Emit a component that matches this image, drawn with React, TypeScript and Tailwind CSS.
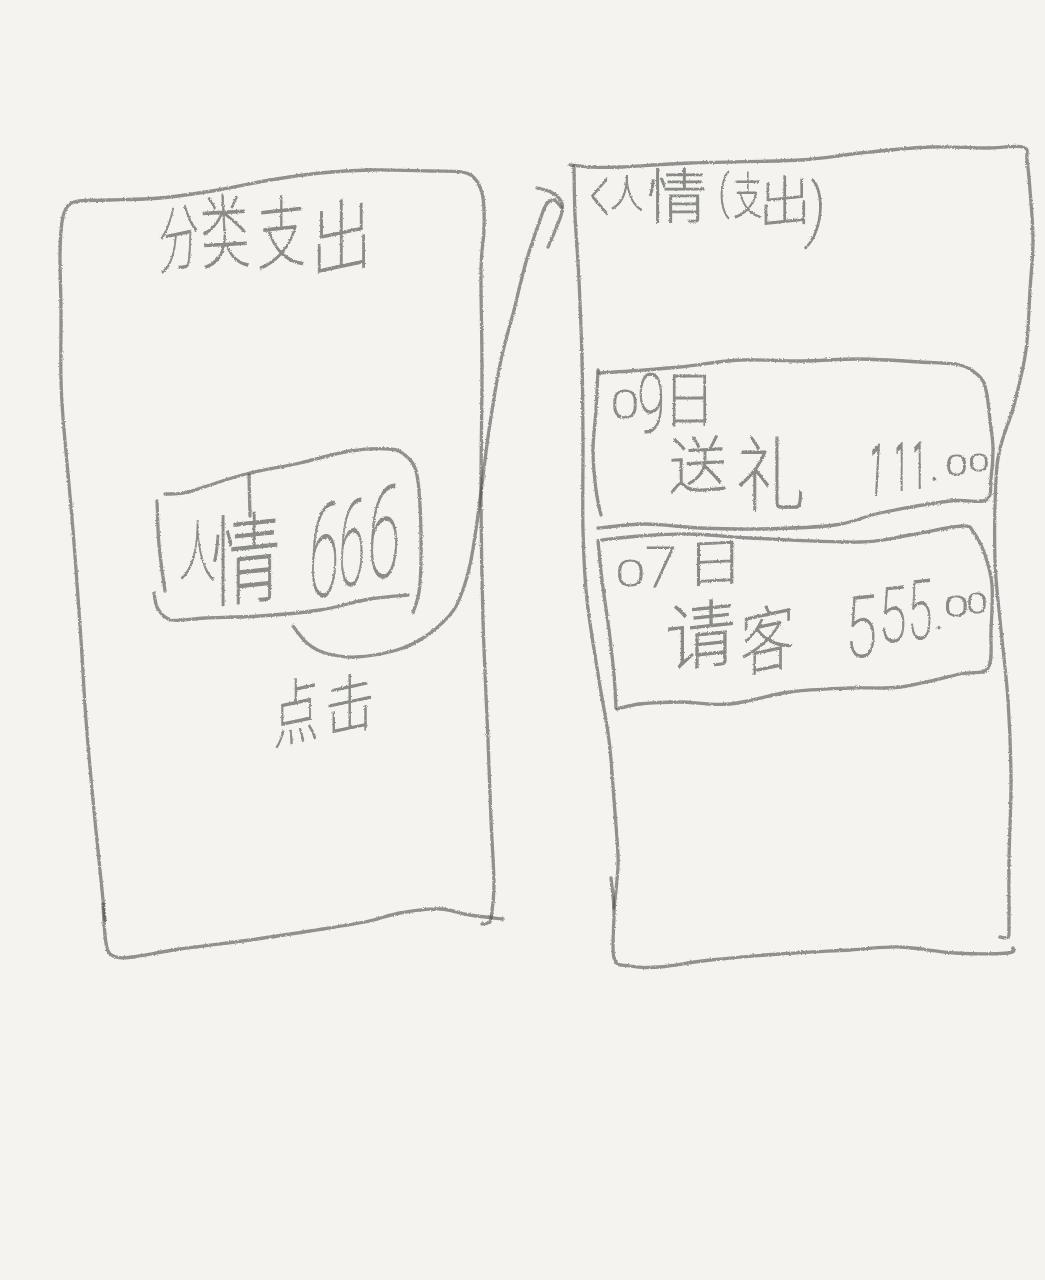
import React from 'react';

type Point = [number, number];

/* Smooth pen stroke through a list of points. */
function stroke(points: Point[]): string {
  let d = `M${points[0][0]} ${points[0][1]}`;
  for (let i = 0; i < points.length - 1; i++) {
    const a = points[Math.max(0, i - 1)];
    const b = points[i];
    const c = points[i + 1];
    const e = points[Math.min(points.length - 1, i + 2)];
    d += `C${b[0] + (c[0] - a[0]) / 6} ${b[1] + (c[1] - a[1]) / 6} ${c[0] - (e[0] - b[0]) / 6} ${c[1] - (e[1] - b[1]) / 6} ${c[0]} ${c[1]}`;
  }
  return d;
}

function Pencil({ box, lines, className }: { box: string; lines: Point[][]; className: string }) {
  return (
    <svg viewBox={box} className={`pointer-events-none absolute overflow-visible ${className}`} aria-hidden="true">
      <g filter="url(#pencil)" fill="none" stroke="#444442" strokeOpacity="0.56" strokeWidth="3.3" strokeLinecap="round" strokeLinejoin="round">
        {lines.map((line, i) => (
          <path key={i} d={stroke(line)} />
        ))}
      </g>
    </svg>
  );
}

const FAMILY = 'Roboto, "Noto Sans CJK SC", sans-serif';
const pen = document.createElement('canvas').getContext('2d')!;

/* One handwritten character, stretched to fill a w × h box. */
function Ink({ ch, w, h, x = 0, y = 0, tilt = '' }: { ch: string; w: number; h: number; x?: number; y?: number; tilt?: string }) {
  pen.font = `100 100px ${FAMILY}`;
  const m = pen.measureText(ch);
  const inkW = m.actualBoundingBoxLeft + m.actualBoundingBoxRight;
  const inkH = m.actualBoundingBoxAscent + m.actualBoundingBoxDescent;
  const size = (h / inkH) * 100;
  const k = size / 100;
  const baseline = size / 2 + ((m.fontBoundingBoxAscent - m.fontBoundingBoxDescent) / 2) * k;
  const sx = w / (inkW * k);
  return (
    <span className={`block flex-none ${tilt}`} style={{ width: w, height: h, marginLeft: x, marginTop: y }}>
      <span
        className="block w-max origin-top-left whitespace-pre font-thin leading-none"
        style={{
          fontSize: size,
          transform: `scaleX(${sx}) translate(${m.actualBoundingBoxLeft * k}px, ${m.actualBoundingBoxAscent * k - baseline}px)`,
        }}
      >
        {ch}
      </span>
    </span>
  );
}

function Line({ className, children }: { className: string; children: React.ReactNode }) {
  return <div className={`flex items-start [filter:url(#pencil)] ${className}`}>{children}</div>;
}

const leftPhone: Point[][] = [
  [[105, 920], [101, 880], [93, 800], [86, 720], [81, 640], [73, 530], [64, 430], [61, 380], [61, 310], [60, 255], [62, 222], [67, 207], [79, 201], [110, 200], [160, 198], [218, 190], [270, 180], [320, 173], [370, 170], [430, 171], [462, 172], [476, 180], [483, 198], [484, 230], [481, 270], [482, 370], [481, 500], [483, 620], [488, 740], [491, 820], [494, 885], [491, 918], [488, 923], [482, 924]],
  [[103, 904], [105, 935], [108, 951], [116, 957], [132, 957], [180, 949], [250, 940], [310, 931], [365, 922], [400, 913], [440, 909], [470, 915], [503, 919]],
];

const leftCard: Point[][] = [
  [[165, 494], [184, 493], [210, 485], [246, 474], [300, 463], [350, 451], [390, 449], [406, 456], [416, 471], [420, 505], [421, 560], [419, 592], [413, 613]],
  [[157, 501], [159, 545], [165, 591]],
  [[154, 593], [158, 609], [172, 620], [205, 618], [260, 616], [320, 610], [370, 599], [408, 595]],
  [[249, 475], [250, 516]],
];

const arrow: Point[][] = [
  [[293, 626], [307, 643], [325, 653], [356, 657], [397, 650], [423, 638], [449, 616], [461, 595], [471, 560], [480, 500], [489, 430], [501, 360], [514, 310], [526, 262], [540, 220], [546, 205], [554, 200], [561, 207]],
  [[537, 188], [551, 192], [561, 201], [562, 212], [555, 231], [548, 247]],
];

const rightPhone: Point[][] = [
  [[570, 165], [590, 167], [620, 167], [690, 163], [800, 160], [860, 153], [930, 147], [985, 148], [1023, 147], [1027, 160], [1030, 190], [1033, 240], [1030, 290], [1026, 350], [1014, 405], [1001, 445], [996, 480], [995, 560], [1000, 620], [1008, 700], [1011, 780], [1009, 860], [1009, 925], [1008, 937], [1000, 937]],
  [[574, 166], [575, 215], [579, 280], [582, 360], [583, 440], [583, 530], [587, 600], [599, 680], [609, 740], [614, 800], [618, 855], [617, 880], [614, 908]],
  [[611, 878], [614, 910], [614, 958], [630, 966], [660, 967], [710, 960], [780, 954], [850, 950], [900, 947], [955, 953], [1008, 953], [1013, 948]],
];

const card09: Point[][] = [
  [[598, 370], [596, 410], [593, 450], [596, 490], [601, 515]],
  [[599, 373], [630, 371], [680, 367], [740, 360], [800, 361], [860, 359], [920, 362], [960, 365], [979, 376], [986, 390], [990, 420], [993, 448], [991, 478], [986, 500], [950, 501], [880, 513], [835, 525], [760, 529], [700, 528], [645, 524], [598, 528]],
];

const card07: Point[][] = [
  [[598, 541], [602, 580], [609, 630], [614, 675], [616, 708]],
  [[602, 540], [640, 536], [690, 534], [750, 538], [860, 542], [910, 535], [962, 526], [974, 533], [985, 555], [992, 585], [991, 630], [988, 668], [960, 674], [900, 687], [850, 688], [790, 692], [730, 704], [680, 702], [640, 704], [617, 709]],
];

export default function App() {
  return (
    <main
      className="relative flex h-[1280px] w-[1045px] items-start overflow-hidden bg-[#f4f3ef] text-[#8a8a87] [-webkit-text-stroke:1.2px_#8a8a87]"
      style={{ fontFamily: FAMILY }}
    >
      <svg className="absolute size-0" aria-hidden="true">
        <filter id="pencil" filterUnits="userSpaceOnUse" x="-20" y="-30" width="1085" height="1330">
          <feTurbulence type="fractalNoise" baseFrequency="0.6" numOctaves="2" seed="4" result="grain" />
          <feDisplacementMap in="SourceGraphic" in2="grain" scale="2.6" xChannelSelector="R" yChannelSelector="G" />
          <feGaussianBlur stdDeviation="0.75" />
        </filter>
      </svg>

      <section className="relative ml-[58px] mt-[168px] h-[792px] w-[436px] flex-none">
        <Pencil box="58 168 436 792" lines={leftPhone} className="left-0 top-0 h-[792px] w-[436px]" />
        <Line className="pl-[103px] pt-[27px]">
          <Ink ch="分" w={36} h={64} y={12} tilt="-skew-y-12" />
          <Ink ch="类" w={44} h={74} x={6} tilt="-rotate-3" />
          <Ink ch="支" w={43} h={73} x={13} tilt="-skew-y-6" />
          <Ink ch="出" w={47} h={74} x={15} y={5} tilt="-skew-y-12" />
        </Line>

        <article className="relative ml-[94px] mt-[173px] h-[175px] w-[272px]">
          <Pencil box="152 447 272 175" lines={leftCard} className="left-0 top-0 h-[175px] w-[272px]" />
          <Line className="pl-[29px] pt-[36px]">
            <Ink ch="人" w={33} h={59} y={39} tilt="skew-y-3" />
            <Ink ch="情" w={64} h={92} x={-1} y={30} tilt="-skew-y-6" />
            <Ink ch="6" w={24} h={96} x={36} y={19} tilt="-skew-x-3" />
            <Ink ch="6" w={21} h={88} x={5} y={16} tilt="-skew-x-3" />
            <Ink ch="6" w={26} h={94} x={9} y={2} tilt="-skew-x-3" />
          </Line>
        </article>

        <Line className="ml-[218px] mt-[52px]">
          <Ink ch="点" w={40} h={66} y={5} tilt="-skew-y-12" />
          <Ink ch="击" w={42} h={60} x={13} y={1} tilt="-skew-y-12" />
        </Line>
      </section>

      <section className="relative ml-[75px] mt-[145px] h-[823px] w-[465px] flex-none">
        <Pencil box="569 145 465 823" lines={rightPhone} className="left-0 top-0 h-[823px] w-[465px]" />
        <Line className="h-[214px] pl-[23px] pt-[22px]">
          <Ink ch="<" w={15} h={38} y={10} />
          <Ink ch="人" w={30} h={34} x={5} y={9} tilt="skew-y-3" />
          <Ink ch="情" w={55} h={54} x={7} y={2} />
          <Ink ch="(" w={8} h={49} x={17} y={4} />
          <Ink ch="支" w={26} h={46} x={6} y={5} />
          <Ink ch="出" w={40} h={51} x={4} y={9} tilt="-skew-y-6" />
          <Ink ch=")" w={13} h={71} x={3} y={12} tilt="-skew-x-6" />
        </Line>

        <article className="relative ml-[23px] h-[167px] w-[402px]">
          <Pencil box="592 359 402 167" lines={card09} className="left-0 top-0 h-[167px] w-[402px]" />
          <Line className="h-[76px] pl-[21px] pt-[14px]">
            <Ink ch="0" w={22} h={29} x={1} y={18} />
            <Ink ch="9" w={22} h={59} x={4} y={2} />
            <Ink ch="日" w={33} h={51} x={11} y={3} />
          </Line>
          <Line className="pl-[79px]">
            <Ink ch="送" w={54} h={56} y={2} tilt="-skew-y-3" />
            <Ink ch="礼" w={63} h={74} x={14} y={2} />
            <span className="flex items-start [-webkit-text-stroke:4px_#8a8a87]">
              <Ink ch="1" w={6} h={49} x={70} y={11} tilt="-skew-x-3" />
              <Ink ch="1" w={5} h={45} x={19} y={10} />
              <Ink ch="1" w={5} h={44} x={13} y={9} />
            </span>
            <Ink ch="." w={3} h={3} x={13} y={42} />
            <Ink ch="0" w={17} h={20} x={12} y={21} />
            <Ink ch="0" w={16} h={18} x={6} y={19} />
          </Line>
        </article>

        <article className="relative ml-[28px] h-[183px] w-[397px]">
          <Pencil box="597 526 397 183" lines={card07} className="left-0 top-0 h-[183px] w-[397px]" />
          <Line className="h-[50px] pl-[22px] pt-[14px]">
            <Ink ch="0" w={23} h={28} y={19} />
            <Ink ch="7" w={27} h={40} x={5} y={8} />
            <Ink ch="日" w={36} h={43} x={23} y={3} tilt="-skew-y-3" />
          </Line>
          <Line className="pl-[71px]">
            <Ink ch="请" w={65} h={68} y={25} tilt="-skew-y-6" />
            <Ink ch="客" w={49} h={67} x={10} y={30} tilt="-skew-y-12" />
            <Ink ch="5" w={24} h={62} x={58} y={20} tilt="-skew-y-6" />
            <Ink ch="5" w={21} h={56} x={9} y={11} tilt="-skew-y-6" />
            <Ink ch="5" w={19} h={60} x={7} y={4} tilt="-skew-y-6" />
            <Ink ch="." w={3} h={3} x={7} y={50} />
            <Ink ch="0" w={19} h={20} x={7} y={21} />
            <Ink ch="0" w={16} h={20} x={3} y={18} />
          </Line>
        </article>
      </section>

      <Pencil box="0 0 1045 1280" lines={arrow} className="left-0 top-0 h-[1280px] w-[1045px]" />
    </main>
  );
}
